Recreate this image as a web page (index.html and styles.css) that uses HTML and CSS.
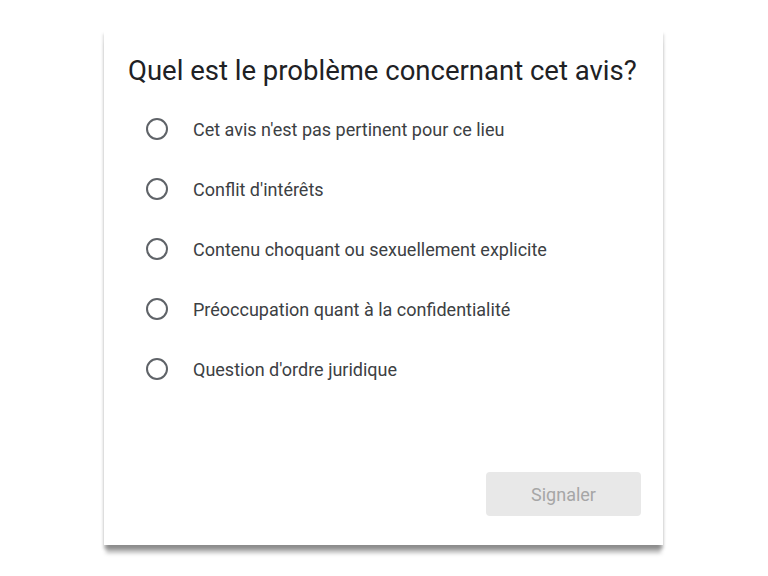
FILE: index.html
```html
<!DOCTYPE html>
<html lang="fr">
<head>
<meta charset="utf-8">
<link rel="stylesheet" href="styles.css">
</head>
<body>
<div class="card">
  <h1 class="title">Quel est le problème concernant cet avis?</h1>
  <ul class="options">
    <li class="option"><span class="radio"></span><span class="label">Cet avis n'est pas pertinent pour ce lieu</span></li>
    <li class="option"><span class="radio"></span><span class="label">Conflit d'intérêts</span></li>
    <li class="option"><span class="radio"></span><span class="label">Contenu choquant ou sexuellement explicite</span></li>
    <li class="option"><span class="radio"></span><span class="label">Préoccupation quant à la confidentialité</span></li>
    <li class="option"><span class="radio"></span><span class="label">Question d'ordre juridique</span></li>
  </ul>
  <div class="actions">
    <button class="submit" disabled>Signaler</button>
  </div>
</div>
</body>
</html>
```

FILE: styles.css
```css
html, body {
  margin: 0;
  padding: 0;
  background: #ffffff;
  font-family: Roboto, "Liberation Sans", Arial, sans-serif;
}
body {
  padding-top: 30px;
  padding-bottom: 20px;
}
.card {
  margin-left: 104px;
  width: 559px;
  height: 515px;
  background: #ffffff;
  box-shadow: 0 10px 4px -2px rgba(0,0,0,0.27), -1px 4px 3px rgba(0,0,0,0.13), 1px 4px 3px rgba(0,0,0,0.13);
  display: flex;
  flex-direction: column;
  box-sizing: border-box;
}
.title {
  margin: 24px 0 0 24px;
  font-size: 27.5px;
  font-weight: 400;
  color: #202124;
  line-height: 34px;
}
.options {
  list-style: none;
  margin: 11px 0 0 0;
  padding: 0 0 0 42px;
}
.option {
  display: flex;
  align-items: center;
  height: 60px;
}
.radio {
  width: 22px;
  height: 22px;
  box-sizing: border-box;
  border: 2px solid #5f6368;
  border-radius: 50%;
  flex: none;
}
.label {
  margin-left: 25px;
  font-size: 18px;
  color: #3c4043;
}
.actions {
  margin-top: auto;
  display: flex;
  justify-content: flex-end;
  padding: 0 22px 29px 0;
}
.submit {
  width: 155px;
  height: 44px;
  border: none;
  border-radius: 4px;
  background: #e8e8e8;
  color: #a6a6a6;
  font-family: Roboto, "Liberation Sans", Arial, sans-serif;
  font-size: 18px;
}
```
